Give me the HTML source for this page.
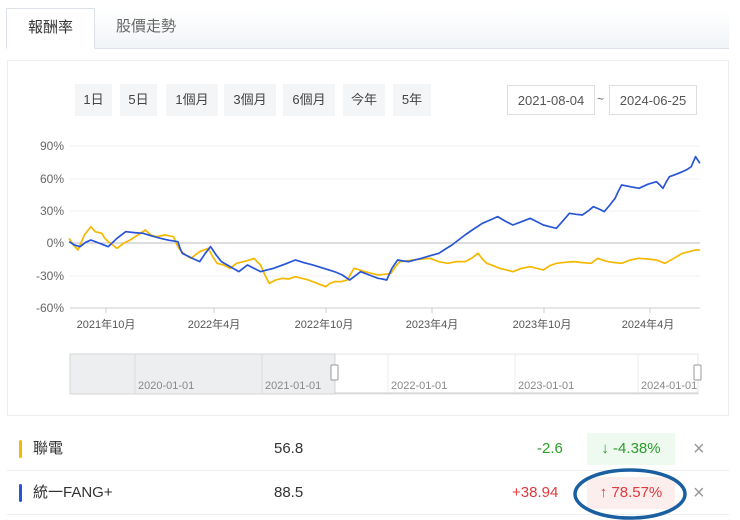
<!DOCTYPE html>
<html><head><meta charset="utf-8"><style>
*{box-sizing:border-box;margin:0;padding:0}
body{width:740px;height:520px;background:#fff;font-family:"Liberation Sans","Noto Sans CJK TC",sans-serif;position:relative;overflow:hidden;color:#333}
.tabs{position:absolute;left:6px;top:8px;width:723px;height:41px;background:linear-gradient(#fff,#f1f4f7);border-bottom:1px solid #dde2e8}
.tab{position:absolute;top:0;height:41px;line-height:38px;font-size:15px}
.t1{left:0;width:89px;background:#fff;border:1px solid #dde2e8;border-bottom:1px solid #fff;text-align:center;color:#333}
.t2{left:110px;color:#666}
.panel{position:absolute;left:7px;top:60px;width:722px;height:356px;border:1px solid #eee}
.btn{position:absolute;top:84px;height:32px;line-height:32px;background:#f4f5f6;font-size:13px;color:#444;text-align:center}
.date{position:absolute;top:85px;height:30px;line-height:30px;border:1px solid #ddd;font-size:13px;color:#555;text-align:center;width:88px}
.row{position:absolute;left:7px;width:722px;height:44px;border-bottom:1px solid #eee;font-size:15px}
.row span{position:absolute;top:0;line-height:44px}
.bar{position:absolute;left:12px;top:13px;width:3px;height:18px;border-radius:2px}
</style></head><body>
<div class="tabs"><div class="tab t1">報酬率</div><div class="tab t2">股價走勢</div></div>
<div class="panel"></div>
<div class="btn" style="left:75px;width:37px">1日</div>
<div class="btn" style="left:120px;width:37px">5日</div>
<div class="btn" style="left:166px;width:52px">1個月</div>
<div class="btn" style="left:224px;width:52px">3個月</div>
<div class="btn" style="left:283px;width:52px">6個月</div>
<div class="btn" style="left:343px;width:42px">今年</div>
<div class="btn" style="left:393px;width:38px">5年</div>
<div class="date" style="left:507px">2021-08-04</div>
<div style="position:absolute;left:597px;top:92px;font-size:12px;color:#666">~</div>
<div class="date" style="left:609px">2024-06-25</div>
<svg style="position:absolute;left:0;top:0" width="740" height="420">
<g stroke="#f2f2f2"><line x1="70" y1="146" x2="700" y2="146"/><line x1="70" y1="179" x2="700" y2="179"/><line x1="70" y1="211" x2="700" y2="211"/><line x1="70" y1="276" x2="700" y2="276"/></g>
<line x1="70" y1="243" x2="700" y2="243" stroke="#bbb"/>
<line x1="70" y1="308" x2="700" y2="308" stroke="#ccc"/>
<g stroke="#ccc"><line x1="106" y1="308" x2="106" y2="313"/><line x1="214" y1="308" x2="214" y2="313"/><line x1="326" y1="308" x2="326" y2="313"/><line x1="432" y1="308" x2="432" y2="313"/><line x1="544" y1="308" x2="544" y2="313"/><line x1="650" y1="308" x2="650" y2="313"/></g>
<g font-size="12" fill="#666" text-anchor="end" font-family="Liberation Sans">
<text x="64" y="150">90%</text><text x="64" y="183">60%</text><text x="64" y="215">30%</text><text x="64" y="247">0%</text><text x="64" y="280">-30%</text><text x="64" y="312">-60%</text></g>
<g font-size="11" fill="#555" text-anchor="middle" font-family="Liberation Sans,Noto Sans CJK TC">
<text x="106" y="328">2021年10月</text><text x="214" y="328">2022年4月</text><text x="324" y="328">2022年10月</text><text x="432" y="328">2023年4月</text><text x="542" y="328">2023年10月</text><text x="648" y="328">2024年4月</text></g>
<g transform="translate(30,135) scale(0.435,0.3333)" fill="none" stroke-width="1.7" stroke-linejoin="round">
<polyline vector-effect="non-scaling-stroke" stroke="#f5b800" points="90,310 100,330 110,345 125,300 140,275 150,290 165,295 172,310 180,320 190,330 200,340 215,325 230,315 248,300 265,285 278,300 290,305 310,300 330,305 338,330 345,345 358,360 370,370 390,350 410,340 420,365 430,385 445,390 460,400 475,385 490,380 505,375 515,370 522,380 530,390 540,420 550,445 565,435 580,430 595,432 610,425 625,430 640,435 660,445 680,455 690,445 700,440 715,440 730,435 738,415 745,400 758,405 770,410 785,415 800,420 815,418 830,415 840,395 850,380 865,378 880,375 900,372 920,370 940,380 960,385 980,380 1000,380 1015,370 1030,355 1040,372 1050,385 1065,392 1080,400 1095,405 1110,410 1130,400 1150,395 1165,400 1180,405 1195,392 1210,385 1230,382 1250,380 1270,383 1290,385 1305,370 1318,376 1330,380 1345,383 1360,385 1380,375 1400,370 1420,372 1440,375 1460,385 1480,370 1500,355 1515,350 1530,345 1540,345"/>
<polyline vector-effect="non-scaling-stroke" stroke="#2855d8" points="90,320 102,330 115,335 128,322 140,315 160,325 180,335 200,310 220,290 240,293 260,295 280,303 300,310 320,316 340,320 345,340 350,355 370,368 390,380 403,355 415,335 428,360 440,380 460,395 480,410 490,400 500,390 515,400 530,410 545,405 560,400 585,388 610,375 630,383 650,390 675,400 700,410 718,420 735,435 748,422 760,410 780,420 800,430 810,432 820,435 832,400 845,375 858,378 870,380 885,375 900,370 920,362 940,355 955,342 970,330 985,315 1000,300 1020,282 1040,265 1058,255 1075,245 1092,258 1110,270 1130,260 1150,250 1165,260 1180,270 1195,275 1210,280 1225,258 1240,235 1255,238 1270,240 1283,228 1295,215 1308,222 1320,230 1333,210 1345,190 1352,170 1360,150 1380,155 1400,160 1420,148 1440,140 1448,150 1455,160 1462,142 1470,125 1485,118 1500,110 1510,104 1520,95 1525,80 1530,65 1535,75 1540,85"/>
</g>
<rect x="70" y="354" width="628" height="40" fill="none" stroke="#e4e4e4"/>
<rect x="70" y="354" width="265" height="40" fill="#eceeef" stroke="#d5d5d5"/>
<line x1="135" y1="354" x2="135" y2="394" stroke="#ddd"/><line x1="262" y1="354" x2="262" y2="394" stroke="#ddd"/><line x1="388" y1="354" x2="388" y2="394" stroke="#eee"/><line x1="515" y1="354" x2="515" y2="394" stroke="#eee"/><line x1="638" y1="354" x2="638" y2="394" stroke="#eee"/>
<line x1="335" y1="393" x2="698" y2="393" stroke="#ccc"/>
<g font-size="11" fill="#888" font-family="Liberation Sans"><text x="138" y="389">2020-01-01</text><text x="265" y="389">2021-01-01</text><text x="391" y="389">2022-01-01</text><text x="518" y="389">2023-01-01</text><text x="641" y="389">2024-01-01</text></g>
<rect x="331" y="365" width="7" height="15" rx="1" fill="#fff" stroke="#999"/><rect x="694" y="365" width="7" height="15" rx="1" fill="#fff" stroke="#999"/>
</svg>
<div class="row" style="top:427px"><div class="bar" style="background:#f5b800"></div><span style="left:26px">聯電</span><span style="left:267px">56.8</span><span style="left:530px;color:#2a9d2a">-2.6</span><div style="position:absolute;left:580px;top:6px;width:88px;height:32px;background:#eef9ef;color:#2a9d2a;line-height:32px;text-align:center">↓ -4.38%</div><span style="left:686px;color:#999;font-size:20px">×</span></div>
<div class="row" style="top:471px"><div class="bar" style="background:#2855d8"></div><span style="left:26px">統一FANG+</span><span style="left:267px">88.5</span><span style="left:505px;color:#e0393e">+38.94</span><div style="position:absolute;left:580px;top:6px;width:88px;height:32px;background:#fdeeee;color:#e0393e;line-height:32px;text-align:center">↑ 78.57%</div><span style="left:686px;color:#999;font-size:20px">×</span></div>
<svg style="position:absolute;left:0;top:0" width="740" height="520"><ellipse cx="630" cy="494" rx="55" ry="24" fill="none" stroke="#1a5fa0" stroke-width="3.5"/></svg>
</body></html>
